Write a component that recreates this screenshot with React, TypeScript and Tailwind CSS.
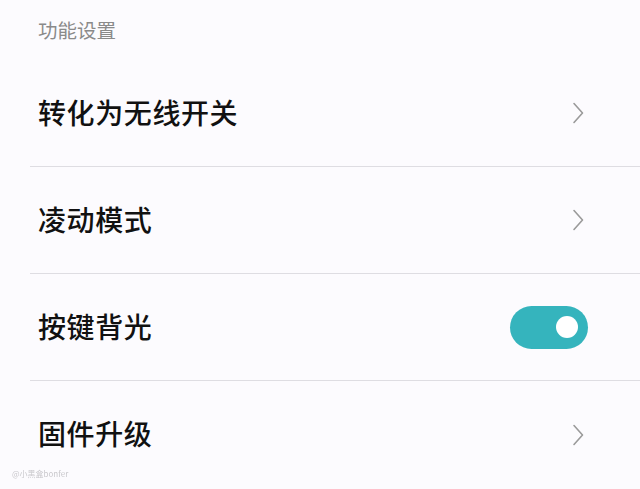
const font = { fontFamily: '"Noto Sans CJK SC", "Noto Sans", sans-serif' };

function Chevron() {
  return (
    <svg width="12" height="22" viewBox="0 0 12 22" fill="none" className="mr-[56px]">
      <path d="M2 1.5 L10.5 11 L2 20.5" stroke="#9a9a9a" strokeWidth="1.6" strokeLinecap="round" strokeLinejoin="round" />
    </svg>
  );
}

function Toggle() {
  return (
    <div className="mr-[52px] flex h-[43px] w-[78px] items-center justify-end rounded-full bg-[#35b4bd] pr-[10px]">
      <div className="h-[22px] w-[22px] rounded-full bg-white" />
    </div>
  );
}

function Row({ label, right, last }: { label: string; right: React.ReactNode; last?: boolean }) {
  return (
    <div className={"ml-[30px] flex h-[107px] items-center justify-between " + (last ? "" : "border-b border-[#dedde2]")}>
      <span className="-mt-[3px] pl-[8px] text-[28px] font-medium leading-none tracking-[0.6px] text-[#111]">{label}</span>
      {right}
    </div>
  );
}

export default function App() {
  return (
    <div className="relative h-[489px] w-[640px] overflow-hidden bg-[#fcfbfe]" style={font}>
      <div className="h-[60px] pl-[38px] pt-[20px] text-[19.5px] leading-none text-[#8a8a8a]">功能设置</div>
      <Row label="转化为无线开关" right={<Chevron />} />
      <Row label="凌动模式" right={<Chevron />} />
      <Row label="按键背光" right={<Toggle />} />
      <Row label="固件升级" right={<Chevron />} last />
      <div className="absolute bottom-[11px] left-[12px] text-[8px] leading-none text-[#c9c8cc] blur-[0.6px]">@小黑盒bonfer</div>
    </div>
  );
}
